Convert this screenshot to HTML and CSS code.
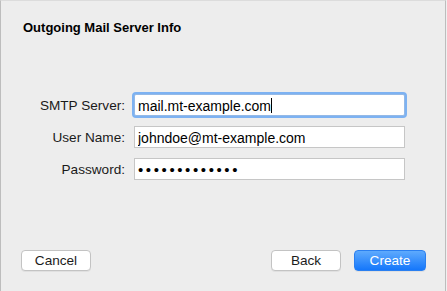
FILE: index.html
```html
<!DOCTYPE html>
<html lang="en">
<head>
    <meta charset="UTF-8">
    <meta name="viewport" content="width=device-width, initial-scale=1.0">
    <title>Outgoing Mail Server Info</title>
    <link rel="stylesheet" href="styles.css">
</head>
<body>
    <div class="sheet">
        <h1 class="title">Outgoing Mail Server Info</h1>

        <form action="/" class="form">
            <label for="smtp" class="label">SMTP Server:</label>
            <div class="field-wrap">
                <input type="text" id="smtp" class="input input-focus" value="mail.mt-example.com">
                <span class="caret"></span>
            </div>

            <label for="user" class="label">User Name:</label>
            <input type="text" id="user" class="input" value="johndoe@mt-example.com">

            <label for="pass" class="label">Password:</label>
            <input type="password" id="pass" class="input input-password" value="secretpasswd1">
        </form>

        <div class="buttons">
            <button class="button">Cancel</button>
            <div class="spacer"></div>
            <button class="button">Back</button>
            <button class="button primary-button">Create</button>
        </div>
    </div>
</body>
</html>
```

FILE: styles.css
```css
:root {
  --bg: #ededed;
  --edge: #bdbdbd;
  --field-border: #c6c6c6;
  --focus: #7db2f2;
  --blue-top: #5eaafd;
  --blue-bottom: #1577fb;
  --text: #000000;
}
body {
  margin: 0;
  background-color: #f0f0f0;
  font-family: 'Liberation Sans', Arial, sans-serif;
}
.sheet {
  width: 444px;
  height: 290px;
  background-color: var(--bg);
  border-left: 1px solid var(--edge);
  border-right: 1px solid var(--edge);
  border-top: 1px solid #dcdcdc;
  display: flex;
  flex-direction: column;
}
.title {
  margin: 0;
  padding: 19px 0 0 22px;
  font-size: 13px;
  font-weight: bold;
  line-height: 15px;
  color: var(--text);
}
.form {
  display: grid;
  grid-template-columns: 124px 271px;
  column-gap: 9px;
  row-gap: 10px;
  align-items: center;
  margin-top: 59px;
}
.label {
  font-size: 13.6px;
  text-align: right;
  color: #1a1a1a;
}
.field-wrap {
  position: relative;
  display: flex;
}
.input {
  box-sizing: border-box;
  width: 271px;
  height: 22px;
  margin: 0;
  padding: 1px 3px 0;
  border: 1px solid var(--field-border);
  background-color: #ffffff;
  font-family: 'Liberation Sans', Arial, sans-serif;
  font-size: 14px;
  color: var(--text);
  outline: none;
}
.input-password {
  font-size: 15px;
  letter-spacing: 2.6px;
}
.input-focus {
  border-color: #94b9e6;
  box-shadow: 0 0 0 2px var(--focus);
  border-radius: 2px;
}
/* text caret after the typed address */
.caret {
  position: absolute;
  left: 137px;
  top: 4px;
  width: 1px;
  height: 15px;
  background-color: #000000;
}
.buttons {
  display: flex;
  gap: 13px;
  margin-top: auto;
  padding: 0 19px 20px 20px;
}
.spacer {
  flex: 1;
}
.button {
  width: 70px;
  height: 21px;
  padding: 0;
  border: 1px solid #c3c3c3;
  border-radius: 4px;
  background-color: #ffffff;
  font-family: 'Liberation Sans', Arial, sans-serif;
  font-size: 13.6px;
  color: #1c1c1c;
  box-shadow: 0 1px 0 rgba(0, 0, 0, 0.05);
}
.primary-button {
  width: 72px;
  background: linear-gradient(var(--blue-top), var(--blue-bottom));
  border-color: #2a7ff0;
  color: #ffffff;
}
```
